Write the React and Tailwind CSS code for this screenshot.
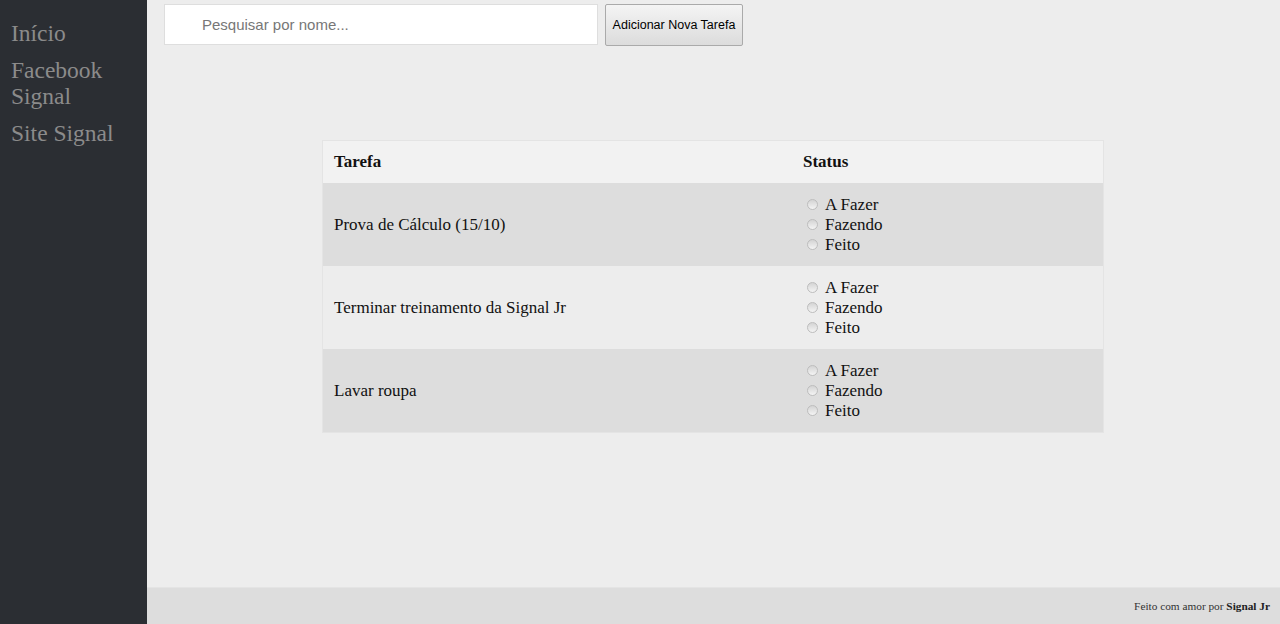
import { useState } from "react";

const tasks = [
  { id: 1, name: "Prova de Cálculo (15/10)" },
  { id: 2, name: "Terminar treinamento da Signal Jr" },
  { id: 3, name: "Lavar roupa" },
];

const statuses = ["A Fazer", "Fazendo", "Feito"];

function Radio({ label, checked, onClick }) {
  return (
    <label onClick={onClick} className="flex items-center h-[20px] cursor-pointer">
      <span
        className={`w-[11px] h-[11px] rounded-full border border-[#bdbdbd] bg-gradient-to-b from-[#d4d4d4] to-[#f4f4f4] mr-[7px] ${
          checked ? "ring-2 ring-inset ring-[#888]" : ""
        }`}
      />
      <span>{label}</span>
    </label>
  );
}

export default function App() {
  const [search, setSearch] = useState("");
  const [status, setStatus] = useState({});

  return (
    <div className="h-screen flex font-['Liberation_Serif',serif] bg-[#ededed] overflow-hidden">
      {/* SIDEBAR */}
      <nav className="w-[147px] shrink-0 bg-[#2b2e33] pl-[11px] pt-[20px] flex flex-col gap-[11px] text-[23.5px] leading-[26px] text-[#8b8b8b]">
        <a href="#">Início</a>
        <a href="#">Facebook Signal</a>
        <a href="#">Site Signal</a>
      </nav>

      <div className="flex-1 flex flex-col min-w-0">
        <main className="flex-1">
          {/* TOP BAR */}
          <div className="flex items-start gap-[7px] pl-[17px] pt-[4px]">
            <input
              value={search}
              onChange={(e) => setSearch(e.target.value)}
              placeholder="Pesquisar por nome..."
              className="w-[434px] h-[41px] bg-white border border-[#dedede] pl-[37px] font-['Liberation_Sans',sans-serif] text-[15px] text-[#333] placeholder:text-[#777] outline-none"
            />
            <button className="w-[138px] h-[42px] border border-[#aaa] rounded-[2px] bg-gradient-to-b from-[#f4f4f4] to-[#dcdcdc] font-['Liberation_Sans',sans-serif] text-[12.5px] text-black">
              Adicionar Nova Tarefa
            </button>
          </div>

          {/* TABLE */}
          <div className="flex justify-center mt-[94px] pr-[1px]">
            <table className="w-[782px] border border-[#e4e4e4] border-separate border-spacing-0 text-[17px] text-[#111] table-fixed">
              <thead>
                <tr className="bg-[#f2f2f2] h-[42px]">
                  <th className="w-[468px] text-left font-bold pl-[11px]">Tarefa</th>
                  <th className="text-left font-bold pl-[12px]">Status</th>
                </tr>
              </thead>
              <tbody>
                {tasks
                  .filter((t) => t.name.toLowerCase().includes(search.toLowerCase()))
                  .map((t, i) => (
                    <tr key={t.id} className={`h-[83px] ${i % 2 === 0 ? "bg-[#dddddd]" : "bg-[#ededed]"}`}>
                      <td className="pl-[11px]">{t.name}</td>
                      <td className="pl-[16px] py-[10px]">
                        {statuses.map((s) => (
                          <Radio
                            key={s}
                            label={s}
                            checked={status[t.id] === s}
                            onClick={() => setStatus((p) => ({ ...p, [t.id]: s }))}
                          />
                        ))}
                      </td>
                    </tr>
                  ))}
              </tbody>
            </table>
          </div>
        </main>

        {/* FOOTER */}
        <footer className="h-[37px] bg-[#dddddd] border-t border-[#e4e4e4] flex items-center justify-end pr-[10px] text-[11.3px] text-[#333]">
          Feito com amor por&nbsp;<b className="text-[#222]">Signal Jr</b>
        </footer>
      </div>
    </div>
  );
}
